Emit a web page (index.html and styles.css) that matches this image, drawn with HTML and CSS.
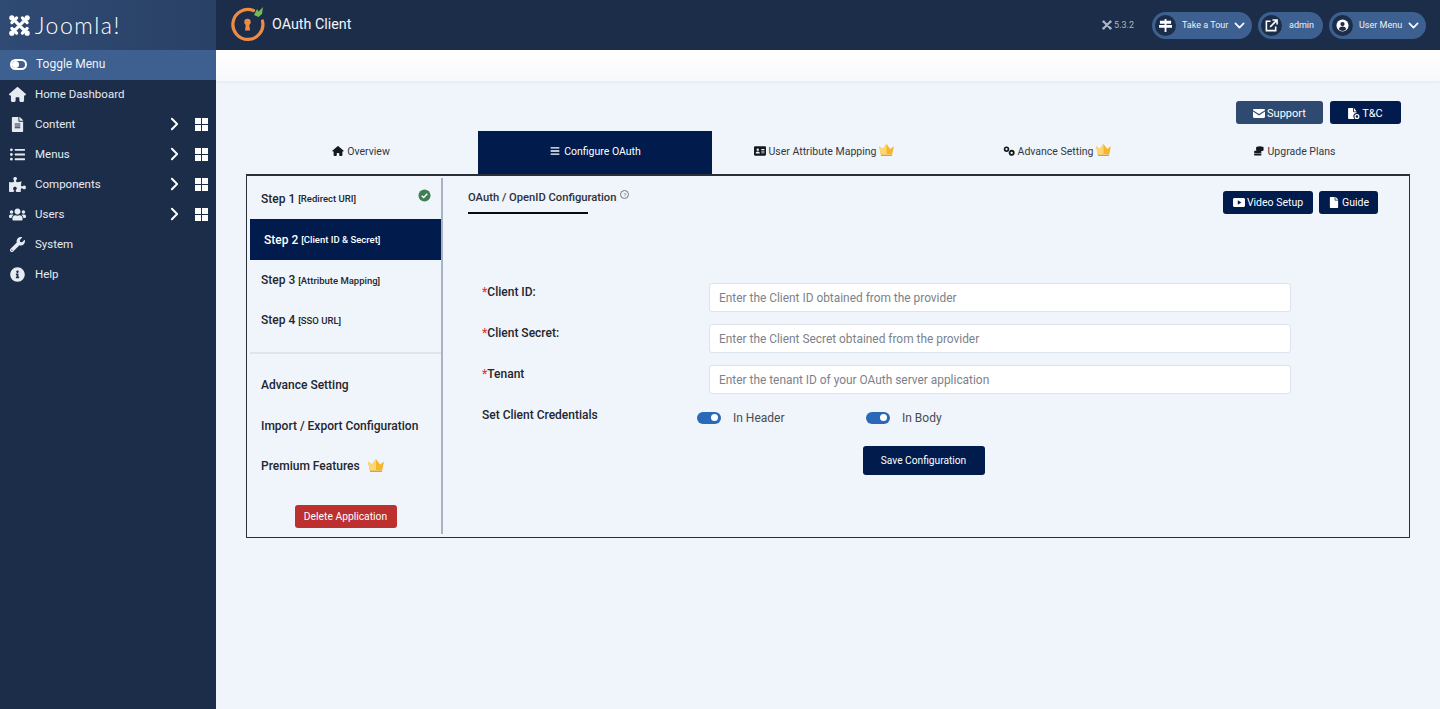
FILE: index.html
```html
<!DOCTYPE html>
<html lang="en">
<head>
<meta charset="utf-8">
<title>OAuth Client</title>
<link rel="stylesheet" href="styles.css">
</head>
<body>
<svg class="defs" width="0" height="0" aria-hidden="true">
  <symbol id="i-home" viewBox="0 0 576 512"><path d="M575.8 255.5c0 18-15 32.100-32 32.100h-32l.7 160.200c0 2.700-.2 5.400-.5 8.100V472c0 22.100-17.900 40-40 40H456c-1.100 0-2.200 0-3.300-.1-1.400.1-2.800.1-4.200.1H392c-22.100 0-40-17.900-40-40v-88c0-17.700-14.300-32-32-32H256c-17.700 0-32 14.300-32 32v88c0 22.100-17.900 40-40 40h-55.900c-1.500 0-3-.1-4.500-.2-1.200.1-2.400.2-3.600.2H104c-22.100 0-40-17.900-40-40V360c0-.9 0-1.900.1-2.800v-69.600H32c-18 0-32-14-32-32.100 0-9 3-17 10-24L266.400 8c7-7 15-8 22-8s15 2 21 7l255.400 224.500c8 7 12 15 11 24z"/></symbol>
  <symbol id="i-file" viewBox="0 0 384 512"><path d="M224 136V0H24C10.700 0 0 10.700 0 24v464c0 13.300 10.700 24 24 24h336c13.300 0 24-10.700 24-24V160H248c-13.200 0-24-10.800-24-24zm64 236c0 6.600-5.400 12-12 12H108c-6.600 0-12-5.400-12-12v-8c0-6.600 5.400-12 12-12h168c6.600 0 12 5.400 12 12v8zm0-64c0 6.600-5.400 12-12 12H108c-6.600 0-12-5.400-12-12v-8c0-6.600 5.400-12 12-12h168c6.600 0 12 5.400 12 12v8zm0-72v8c0 6.600-5.400 12-12 12H108c-6.600 0-12-5.400-12-12v-8c0-6.600 5.400-12 12-12h168c6.600 0 12 5.400 12 12zm96-114.100v6.100H256V0h6.100c6.400 0 12.500 2.500 17 7l97.900 98c4.500 4.500 7 10.600 7 16.900z"/></symbol>
  <symbol id="i-list" viewBox="0 0 512 512"><path d="M48 48a48 48 0 1 0 48 48 48 48 0 0 0-48-48zm0 160a48 48 0 1 0 48 48 48 48 0 0 0-48-48zm0 160a48 48 0 1 0 48 48 48 48 0 0 0-48-48zm448 16H176a16 16 0 0 0-16 16v32a16 16 0 0 0 16 16h320a16 16 0 0 0 16-16v-32a16 16 0 0 0-16-16zm0-320H176a16 16 0 0 0-16 16v32a16 16 0 0 0 16 16h320a16 16 0 0 0 16-16V80a16 16 0 0 0-16-16zm0 160H176a16 16 0 0 0-16 16v32a16 16 0 0 0 16 16h320a16 16 0 0 0 16-16v-32a16 16 0 0 0-16-16z"/></symbol>
  <symbol id="i-puzzle" viewBox="0 0 576 512"><path d="M519.442 288.651c-41.519 0-59.500 31.593-82.058 31.593C377.409 320.244 432 144 432 144s-196.288 80-196.288-3.297c0-35.827 36.288-46.250 36.288-85.985C272 19.216 243.885 0 210.539 0c-34.654 0-66.366 18.891-66.366 56.346 0 41.364 31.711 59.277 31.711 81.750C175.885 207.719 0 166.758 0 166.758v333.237s178.635 41.047 178.635-28.662c0-22.473-40-40.107-40-81.471 0-37.456 29.250-56.346 63.577-56.346 33.673 0 61.788 19.216 61.788 54.717 0 39.735-36.288 50.158-36.288 85.985 0 60.803 129.675 25.730 181.230 25.730 0 0-34.725-120.101 25.827-120.101 35.962 0 46.423 36.152 86.308 36.152C556.712 416 576 387.990 576 354.443c0-34.199-18.962-65.792-56.558-65.792z"/></symbol>
  <symbol id="i-users" viewBox="0 0 640 512"><path d="M96 224c35.300 0 64-28.700 64-64s-28.700-64-64-64-64 28.700-64 64 28.700 64 64 64zm448 0c35.300 0 64-28.700 64-64s-28.700-64-64-64-64 28.700-64 64 28.700 64 64 64zm32 32h-64c-17.600 0-33.500 7.100-45.100 18.600 40.300 22.100 68.900 62 75.100 109.400h66c17.700 0 32-14.300 32-32v-32c0-35.300-28.700-64-64-64zm-256 0c61.900 0 112-50.100 112-112S381.900 32 320 32 208 82.100 208 144s50.100 112 112 112zm76.800 32h-8.300c-20.800 10-43.900 16-68.500 16s-47.600-6-68.500-16h-8.300C179.600 288 128 339.600 128 403.200V432c0 26.500 21.500 48 48 48h288c26.500 0 48-21.500 48-48v-28.800c0-63.600-51.600-115.200-115.200-115.200zm-223.700-13.400C161.500 263.100 145.600 256 128 256H64c-35.300 0-64 28.700-64 64v32c0 17.700 14.300 32 32 32h65.900c6.300-47.400 34.900-87.300 75.200-109.400z"/></symbol>
  <symbol id="i-wrench" viewBox="0 0 512 512"><path d="M507.730 109.100c-2.240-9.030-13.540-12.090-20.120-5.510l-74.360 74.360-67.880-11.310-11.310-67.880 74.360-74.360c6.620-6.620 3.430-17.900-5.660-20.160-47.380-11.740-99.550.91-136.580 37.930-39.640 39.640-50.550 97.100-34.050 147.200L18.740 402.760c-24.990 24.990-24.990 65.510 0 90.500 24.990 24.990 65.510 24.990 90.500 0l213.210-213.210c50.120 16.710 107.470 5.680 147.370-34.220 37.070-37.070 49.700-89.320 37.910-136.730zM64 472c-13.250 0-24-10.750-24-24 0-13.260 10.750-24 24-24s24 10.740 24 24c0 13.250-10.750 24-24 24z"/></symbol>
  <symbol id="i-info" viewBox="0 0 512 512"><path d="M256 8C119.043 8 8 119.083 8 256c0 136.997 111.043 248 248 248s248-111.003 248-248C504 119.083 392.957 8 256 8zm0 110c23.196 0 42 18.804 42 42s-18.804 42-42 42-42-18.804-42-42 18.804-42 42-42zm56 254c0 6.627-5.373 12-12 12h-88c-6.627 0-12-5.373-12-12v-24c0-6.627 5.373-12 12-12h12v-64h-12c-6.627 0-12-5.373-12-12v-24c0-6.627 5.373-12 12-12h64c6.627 0 12 5.373 12 12v100h12c6.627 0 12 5.373 12 12v24z"/></symbol>
  <symbol id="i-chev" viewBox="0 0 10 16"><path d="M2 2l6 6-6 6" fill="none" stroke="currentColor" stroke-width="2.200" stroke-linecap="round" stroke-linejoin="round"/></symbol>
  <symbol id="i-down" viewBox="0 0 16 10"><path d="M2 2l6 6 6-6" fill="none" stroke="currentColor" stroke-width="2.400" stroke-linecap="round" stroke-linejoin="round"/></symbol>
  <symbol id="i-grid" viewBox="0 0 13 13"><path d="M0 0h6v6H0zM7 0h6v6H7zM0 7h6v6H0zM7 7h6v6H7z"/></symbol>
  <symbol id="i-crown" viewBox="0 0 16 13"><path fill="#f6b62a" d="M0 2.500l4 3L8 0l4 5.500 4-3-1.800 9H1.800z"/><path fill="#fcd672" d="M8 0v11.500H1.800L0 2.500l4 3z"/><path fill="#eb9f1a" d="M2 11.700h12v1.300H2z"/></symbol>
  <symbol id="i-bars" viewBox="0 0 448 512"><path d="M16 132h416c8.800 0 16-7.200 16-16V76c0-8.800-7.200-16-16-16H16C7.200 60 0 67.200 0 76v40c0 8.800 7.200 16 16 16zm0 160h416c8.800 0 16-7.200 16-16v-40c0-8.800-7.200-16-16-16H16c-8.800 0-16 7.200-16 16v40c0 8.800 7.200 16 16 16zm0 160h416c8.800 0 16-7.200 16-16v-40c0-8.800-7.200-16-16-16H16c-8.800 0-16 7.200-16 16v40c0 8.800 7.200 16 16 16z"/></symbol>
  <symbol id="i-plainfile" viewBox="0 0 384 512"><path d="M224 136V0H24C10.700 0 0 10.700 0 24v464c0 13.300 10.700 24 24 24h336c13.300 0 24-10.700 24-24V160H248c-13.200 0-24-10.800-24-24zm160-14.100v6.100H256V0h6.100c6.400 0 12.500 2.500 17 7l97.900 98c4.500 4.500 7 10.600 7 16.900z"/></symbol>
  <symbol id="i-tc" viewBox="0 0 14 13"><path d="M6 4V0H1C.4 0 0 .4 0 1v11c0 .6.4 1 1 1h6.500A4 4 0 0 1 10 6V5H7C6.400 5 6 4.600 6 4zM7 0v4h3z"/><path d="M10.500 7a3 3 0 1 0 0 6 3 3 0 0 0 0-6zm0 1.500a1.500 1.500 0 1 1 0 3 1.500 1.500 0 0 1 0-3z"/></symbol>
  <symbol id="i-idcard" viewBox="0 0 14 11"><path fill-rule="evenodd" d="M1.300 0h11.400C13.400 0 14 .6 14 1.300v8.400c0 .7-.6 1.300-1.300 1.300H1.300C.6 11 0 10.400 0 9.700V1.300C0 .6.600 0 1.300 0zM4.400 2.500a1.400 1.400 0 1 0 0 2.800 1.400 1.400 0 0 0 0-2.800zM2 8.500h4.800c0-1.300-1-2.400-2.400-2.400S2 7.200 2 8.500zM8.500 3.200h3.700v1H8.500zM8.500 5.200h3.700v1H8.500zM8.500 7.200h3.700v1H8.500z"/></symbol>
  <symbol id="i-cogs" viewBox="0 0 14 12"><circle cx="4" cy="3.800" r="2.300" fill="none" stroke="currentColor" stroke-width="2"/><circle cx="10.200" cy="8.200" r="2.500" fill="none" stroke="currentColor" stroke-width="2.200"/></symbol>
  <symbol id="i-coins" viewBox="0 0 12 12"><ellipse cx="7" cy="2" rx="4.500" ry="1.800"/><rect x="2.500" y="2" width="9" height="4" rx="1.500"/><ellipse cx="4.500" cy="7" rx="4.500" ry="1.700"/><rect y="7.600" width="9" height="1.300" rx=".6"/><rect y="9.700" width="9" height="1.700" rx=".8"/></symbol>
</svg>

<div class="app">
  <aside class="sidebar">
    <div class="brand">
      <svg class="joomla-mark" viewBox="0 0 24 24" fill="none" stroke="#fff" stroke-width="3.300" stroke-linecap="round"><path d="M7 7l10 10M17 7L7 17M4 9l5-5M15 20l5-5M15 4l5 5M4 15l5 5"/><circle cx="4" cy="4" r="2.700" fill="#fff" stroke="none"/><circle cx="20" cy="4" r="2.700" fill="#fff" stroke="none"/><circle cx="4" cy="20" r="2.700" fill="#fff" stroke="none"/><circle cx="20" cy="20" r="2.700" fill="#fff" stroke="none"/></svg>
      <span class="joomla-word">Joomla!</span>
    </div>
    <div class="toggle-menu">
      <span class="toggle-ico"></span>
      <span>Toggle Menu</span>
    </div>
    <nav class="side-nav">
      <a class="side-item"><svg class="side-ico"><use href="#i-home"/></svg><span class="side-label">Home Dashboard</span></a>
      <a class="side-item"><svg class="side-ico"><use href="#i-file"/></svg><span class="side-label">Content</span><svg class="chev"><use href="#i-chev"/></svg><svg class="grid"><use href="#i-grid"/></svg></a>
      <a class="side-item"><svg class="side-ico"><use href="#i-list"/></svg><span class="side-label">Menus</span><svg class="chev"><use href="#i-chev"/></svg><svg class="grid"><use href="#i-grid"/></svg></a>
      <a class="side-item"><svg class="side-ico"><use href="#i-puzzle"/></svg><span class="side-label">Components</span><svg class="chev"><use href="#i-chev"/></svg><svg class="grid"><use href="#i-grid"/></svg></a>
      <a class="side-item"><svg class="side-ico"><use href="#i-users"/></svg><span class="side-label">Users</span><svg class="chev"><use href="#i-chev"/></svg><svg class="grid"><use href="#i-grid"/></svg></a>
      <a class="side-item"><svg class="side-ico"><use href="#i-wrench"/></svg><span class="side-label">System</span></a>
      <a class="side-item"><svg class="side-ico"><use href="#i-info"/></svg><span class="side-label">Help</span></a>
    </nav>
  </aside>

  <div class="main">
    <header class="topbar">
      <svg class="oauth-logo" viewBox="0 0 36 36" fill="none">
        <path d="M23.500 4.500A15 15 0 1 0 32.500 15" stroke="#ee8c45" stroke-width="3.200" stroke-linecap="round"/>
        <circle cx="17.500" cy="16" r="3.200" fill="#ee8c45"/>
        <path d="M16 17h3l1 7.500h-5z" fill="#ee8c45"/>
        <path d="M24 9l3-6 1.500 2.500L33 1l-1 7-3.500 3z" fill="#76b852"/>
      </svg>
      <span class="page-title">OAuth Client</span>
      <div class="top-right">
        <span class="version"><svg class="version-ico" viewBox="0 0 24 24" fill="none" stroke="#aab6c6" stroke-width="5" stroke-linecap="round"><path d="M4 4l16 16M20 4L4 20"/><circle cx="4" cy="4" r="3" fill="#aab6c6" stroke="none"/><circle cx="20" cy="4" r="3" fill="#aab6c6" stroke="none"/><circle cx="4" cy="20" r="3" fill="#aab6c6" stroke="none"/><circle cx="20" cy="20" r="3" fill="#aab6c6" stroke="none"/></svg>5.3.2</span>
        <div class="pill pill-tour">
          <span class="pill-ico"><svg viewBox="0 0 14 14" class="pill-svg"><path fill="#fff" d="M6 0h2v2h5v3H8v1.500h6v3H8V14H6V9.500H0v-3h6V5H1V2h5z"/></svg></span>
          <span class="pill-text">Take a Tour</span>
          <svg class="pill-down"><use href="#i-down"/></svg>
        </div>
        <div class="pill pill-admin">
          <span class="pill-ico"><svg viewBox="0 0 14 14" class="pill-svg" fill="none" stroke="#fff" stroke-width="1.700"><path d="M6 2.500H1.500v10h10V8"/><path d="M5.500 8.500L12.500 1.500M8 1h5v5"/></svg></span>
          <span class="pill-text">admin</span>
        </div>
        <div class="pill pill-user">
          <span class="pill-ico"><svg viewBox="0 0 14 14" class="pill-svg"><circle cx="7" cy="7" r="6.500" fill="#fff"/><circle cx="7" cy="5.500" r="2.300" fill="#1c2d49"/><path d="M3 11c.5-2 2-2.800 4-2.800s3.500.8 4 2.800a6 6 0 0 1-8 0z" fill="#1c2d49"/></svg></span>
          <span class="pill-text">User Menu</span>
          <svg class="pill-down"><use href="#i-down"/></svg>
        </div>
      </div>
    </header>
    <div class="subhead"></div>

    <main class="content">
      <div class="top-actions">
        <a class="btn btn-slate"><svg class="btn-ico" viewBox="0 0 12 9"><path fill="#fff" d="M0 1.200C0 .5.500 0 1.200 0h9.600c.7 0 1.200.5 1.200 1.200L6 5 0 1.200zM0 2.600V7.800C0 8.500.5 9 1.200 9h9.600c.7 0 1.200-.5 1.200-1.200V2.600L6 6.400z"/></svg>Support</a>
        <a class="btn btn-navy"><svg class="btn-ico"><use href="#i-tc"/></svg>T&amp;C</a>
      </div>

      <div class="tabs">
        <a class="tab"><svg class="tab-ico"><use href="#i-home"/></svg>Overview</a>
        <a class="tab tab-active"><svg class="tab-ico"><use href="#i-bars"/></svg>Configure OAuth</a>
        <a class="tab tab-attr"><svg class="tab-ico"><use href="#i-idcard"/></svg>User Attribute Mapping<svg class="crown"><use href="#i-crown"/></svg></a>
        <a class="tab tab-adv"><svg class="tab-ico"><use href="#i-cogs"/></svg>Advance Setting<svg class="crown"><use href="#i-crown"/></svg></a>
        <a class="tab"><svg class="tab-ico"><use href="#i-coins"/></svg>Upgrade Plans</a>
      </div>

      <section class="panel">
        <div class="steps">
          <a class="step step-tall"><b>Step 1</b> <small>[Redirect URI]</small><svg class="check" viewBox="0 0 14 14"><circle cx="7" cy="7" r="6.500" fill="#3f7f55"/><path d="M4 7.200l2.100 2L10 5.200" fill="none" stroke="#fff" stroke-width="1.600"/></svg></a>
          <a class="step step-tall step-active"><b>Step 2</b> <small>[Client ID &amp; Secret]</small></a>
          <a class="step"><b>Step 3</b> <small>[Attribute Mapping]</small></a>
          <a class="step"><b>Step 4</b> <small>[SSO URL]</small></a>
          <div class="steps-rule"></div>
          <a class="step"><b>Advance Setting</b></a>
          <a class="step step-tall"><b>Import / Export Configuration</b></a>
          <a class="step"><b>Premium Features</b><svg class="crown crown-side"><use href="#i-crown"/></svg></a>
          <div class="delete-row"><a class="btn btn-red">Delete Application</a></div>
        </div>

        <div class="config">
          <div class="config-head">
            <div class="config-title-wrap">
              <h2 class="config-title">OAuth / OpenID Configuration<span class="help">?</span></h2>
            </div>
            <div class="config-actions">
              <a class="btn btn-navy btn-video"><svg class="btn-ico" viewBox="0 0 12 9"><path fill-rule="evenodd" fill="#fff" d="M1.500 0h9C11.300 0 12 .7 12 1.500v6c0 .8-.7 1.500-1.500 1.500h-9C.7 9 0 8.300 0 7.500v-6C0 .7.700 0 1.500 0zM4.800 2.300v4.400L8.400 4.500z"/></svg>Video Setup</a>
              <a class="btn btn-navy btn-guide"><svg class="btn-ico"><use href="#i-plainfile"/></svg>Guide</a>
            </div>
          </div>

          <form class="form">
            <label class="form-label"><i>*</i>Client ID:</label>
            <input class="form-input" type="text" placeholder="Enter the Client ID obtained from the provider">
            <label class="form-label"><i>*</i>Client Secret:</label>
            <input class="form-input" type="text" placeholder="Enter the Client Secret obtained from the provider">
            <label class="form-label"><i>*</i>Tenant</label>
            <input class="form-input" type="text" placeholder="Enter the tenant ID of your OAuth server application">
            <label class="form-label">Set Client Credentials</label>
            <div class="switches">
              <span class="switch-item"><span class="switch"></span>In Header</span>
              <span class="switch-item"><span class="switch"></span>In Body</span>
            </div>
          </form>
          <div class="save-row"><a class="btn btn-navy btn-save">Save Configuration</a></div>
        </div>
      </section>
    </main>
  </div>
</div>
</body>
</html>
```

FILE: styles.css
```css
* { box-sizing: border-box; }
html, body { margin: 0; height: 100%; }
body {
  font-family: Roboto, "Liberation Sans", sans-serif;
  background: #f0f4fb;
  color: #22262e;
  overflow: hidden;
}
a { text-decoration: none; color: inherit; }
.defs { position: absolute; }
svg { display: block; flex: none; }
svg:not([fill]) { fill: currentColor; }

.app { display: flex; height: 709px; }

/* Sidebar */
.sidebar { width: 216px; flex: none; background: #1c2d49; color: #e6ebf2; }
.brand {
  height: 50px;
  display: flex;
  align-items: center;
  padding-left: 8px;
  background: linear-gradient(90deg, #2f4a73, #2a4166);
}
.joomla-mark { width: 23px; height: 23px; }
.joomla-word {
  font-family: Lato, sans-serif;
  font-weight: 300;
  font-size: 23px;
  letter-spacing: 1.500px;
  color: #fff;
  margin-left: 4px;
}
.toggle-menu {
  height: 30px;
  background: #3d6090;
  display: flex;
  align-items: center;
  padding: 0 0 2px 10px;
  gap: 9px;
  font-size: 12px;
  color: #f0f3f8;
}
.toggle-ico {
  position: relative;
  width: 17px;
  height: 11px;
  border-radius: 6px;
  border: 2px solid #fff;
}
.toggle-ico::after {
  content: "";
  position: absolute;
  left: 0;
  top: 0;
  width: 7px;
  height: 7px;
  border-radius: 50%;
  background: #fff;
}
.side-nav { margin-top: -1px; }
.side-item {
  height: 30px;
  display: flex;
  align-items: center;
  font-size: 11.500px;
  padding-left: 9px;
}
.side-ico { width: 17px; height: 15px; }
.side-label { margin-left: 9px; width: 135px; }
.chev { width: 9px; height: 14px; color: #fff; }
.grid { width: 13px; height: 13px; margin-left: 16px; color: #fff; }

/* Top bar */
.main { flex: 1; min-width: 0; display: flex; flex-direction: column; }
.topbar {
  height: 50px;
  flex: none;
  background: #1c2d49;
  display: flex;
  align-items: center;
  padding-left: 14px;
  color: #fff;
}
.oauth-logo { width: 36px; height: 36px; margin-top: -2px; }
.page-title { font-size: 14.300px; margin-left: 6px; margin-top: -3px; color: #f2f5f8; }
.top-right { margin-left: auto; display: flex; align-items: center; padding-right: 14px; }
.version { font-size: 9px; color: #aab6c6; display: flex; align-items: center; gap: 2px; margin-right: 18px; }
.version-ico { width: 10px; height: 10px; }
.pill {
  height: 27px;
  border-radius: 14px;
  background: #3d6090;
  display: flex;
  align-items: center;
  padding: 0 5px 0 3px;
  font-size: 9px;
  color: #eef2f7;
  margin-right: 6px;
}
.pill:last-child { margin-right: 0; }
.pill-tour { width: 100px; }
.pill-admin { width: 65px; }
.pill-user { width: 97px; }
.pill-ico {
  width: 21px;
  height: 21px;
  border-radius: 50%;
  background: #1c2d49;
  display: flex;
  align-items: center;
  justify-content: center;
  flex: none;
}
.pill-svg { width: 13px; height: 13px; }
.pill-text { margin-left: 6px; white-space: nowrap; }
.pill-admin .pill-text { margin-left: 7px; }
.pill-down { width: 11px; height: 7px; margin-left: auto; margin-right: 2px; color: #fff; }

.subhead {
  height: 31px;
  flex: none;
  background: linear-gradient(#fff, #f8f9fd);
  box-shadow: 0 1px 3px rgba(60, 80, 120, .07);
}

/* Content */
.content { padding: 20px 30px 0; }
.top-actions { display: flex; justify-content: flex-end; gap: 7px; padding-right: 9px; height: 23px; }
.top-actions .btn { padding-top: 1px; }
.btn {
  display: inline-flex;
  align-items: center;
  justify-content: center;
  height: 23px;
  border-radius: 3px;
  font-size: 11px;
  color: #fff;
  gap: 2px;
}
.btn-slate { background: #2e4a70; width: 87px; }
.btn-navy { background: #001b4c; width: 71px; }
.btn-ico { width: 12px; height: 11px; }

.tabs { display: flex; height: 43px; margin: 7px 0 0 -2px; }
.tab {
  width: 234px;
  display: flex;
  align-items: center;
  justify-content: center;
  font-size: 10.500px;
  color: #33383f;
  gap: 3px;
  padding-bottom: 3px;
}
.tab:last-child { width: 228px; }
.tab-ico { width: 12px; height: 10px; color: #14181f; }
.tab-active { background: #001b4c; color: #fff; }
.tab-active .tab-ico { color: #fff; }
.crown { width: 15px; height: 12px; margin: -3px 0 0 0; }
.tab-attr { padding-right: 10px; }
.tab-adv { padding-right: 12px; }

.panel {
  width: 1164px;
  height: 364px;
  border: 1px solid #2a2f3a;
  border-top-width: 2px;
  display: flex;
  padding: 2px 0 3px 3px;
}
.steps {
  width: 193px;
  flex: none;
  border-right: 2px solid #a9b3c4;
  display: flex;
  flex-direction: column;
}
.step {
  height: 40px;
  flex: none;
  display: flex;
  align-items: center;
  padding-left: 11px;
  font-size: 12px;
  color: #22262e;
  gap: 3px;
}
.step-tall { height: 41px; }
.step b { font-weight: 500; }
.step small { font-size: 9.500px; font-weight: 500; }
.step-active { background: #001b4c; color: #fff; padding-left: 14px; }
.check { width: 13px; height: 13px; margin: -6px 10px 0 auto; }
.steps-rule { height: 2px; background: #dfe3ea; margin: 12px 0 11px; flex: none; }
.crown-side { width: 16px; height: 13px; margin-left: 5px; margin-top: -2px; }
.delete-row { display: flex; justify-content: center; margin-top: 19px; }
.btn-red { background: #bd3030; width: 102px; height: 23px; font-size: 10.300px; }

.config { flex: 1; min-width: 0; padding: 0 31px 0 25px; }
.config-head { display: flex; justify-content: space-between; height: 105px; }
.config-title-wrap { width: 120px; }
.config-title {
  margin: 0;
  width: 120px;
  height: 36px;
  padding-top: 12px;
  font-size: 11.200px;
  font-weight: 500;
  line-height: 14px;
  white-space: nowrap;
  color: #2c3138;
  border-bottom: 2px solid #0a0a0a;
}
.help {
  display: inline-block;
  width: 9px;
  height: 9px;
  border: 1px solid #777;
  border-radius: 50%;
  font-size: 6px;
  line-height: 7px;
  text-align: center;
  margin-left: 4px;
  vertical-align: 4px;
  color: #777;
  font-weight: 400;
}
.config-actions { display: flex; gap: 6px; padding-top: 13px; }
.btn-video { width: 90px; font-size: 10.500px; }
.btn-guide { width: 59px; font-size: 10.500px; }

.form {
  display: grid;
  grid-template-columns: 227px 582px;
  grid-auto-rows: 29px;
  row-gap: 12px;
  padding-left: 14px;
  align-items: center;
}
.form-label { font-size: 12px; font-weight: 500; color: #22262e; margin-top: -11px; }
.form-label i { color: #e53935; font-style: normal; }
.form-input {
  width: 582px;
  height: 29px;
  padding: 0 9px;
  border: 1px solid #dee3ec;
  border-radius: 3px;
  background: #fff;
  font: 11.900px Roboto, sans-serif;
  outline: none;
}
.form-input::placeholder { color: #7c828b; opacity: 1; }
.switches { display: flex; margin: -6px 0 0 -12px; font-size: 12px; color: #474c54; }
.switch-item { display: flex; align-items: center; width: 169px; gap: 12px; }
.switch {
  position: relative;
  width: 24px;
  height: 12px;
  border-radius: 6px;
  background: #2a69b8;
}
.switch::after {
  content: "";
  position: absolute;
  right: 3px;
  top: 2.500px;
  width: 7px;
  height: 7px;
  border-radius: 50%;
  background: #fff;
}
.save-row { display: flex; justify-content: center; padding-left: 1px; margin-top: 11px; }
.btn-save { width: 122px; height: 29px; font-size: 10.200px; }
```
